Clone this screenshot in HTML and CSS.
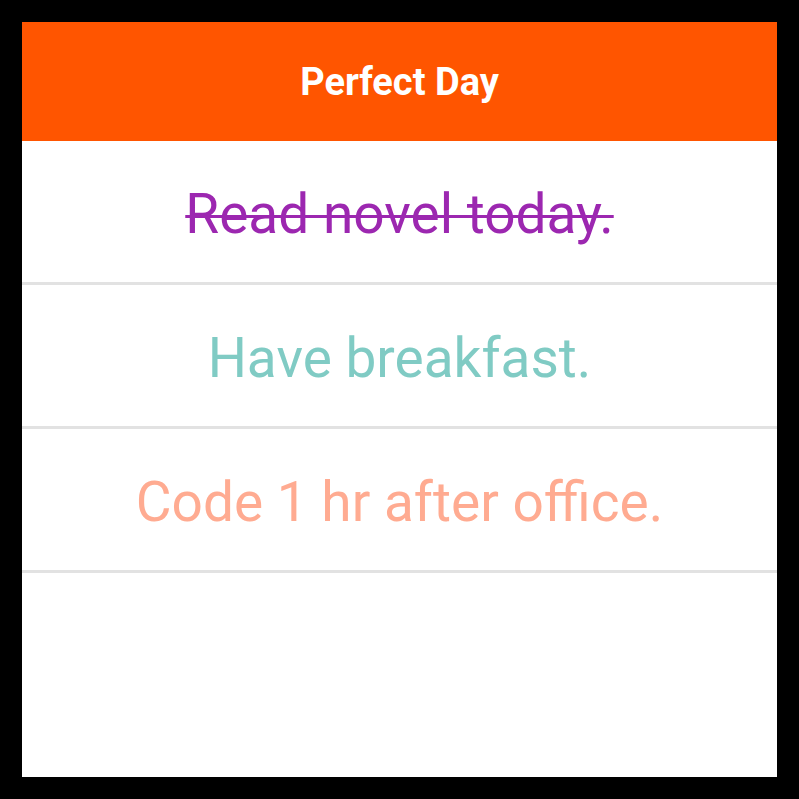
FILE: index.html
```html
<!DOCTYPE html>
<html>
<head>
<meta charset="utf-8">
<link rel="stylesheet" href="styles.css">
</head>
<body>
<div class="screen">
  <header class="appbar">Perfect Day</header>
  <ul class="list">
    <li class="item done">Read novel today.</li>
    <li class="item teal">Have breakfast.</li>
    <li class="item salmon">Code 1 hr after office.</li>
  </ul>
</div>
</body>
</html>
```
FILE: styles.css
```css
html, body {
  margin: 0;
  padding: 0;
  background: #000;
}
body {
  padding: 22px;
  width: 755px;
  height: 755px;
}
.screen {
  width: 755px;
  height: 755px;
  background: #fff;
  display: flex;
  flex-direction: column;
  font-family: Roboto, "Noto Sans", sans-serif;
}
.appbar {
  height: 119px;
  flex: none;
  background: #ff5500;
  color: #fff;
  font-weight: 700;
  font-size: 38px;
  display: flex;
  align-items: center;
  justify-content: center;
}
.list {
  list-style: none;
  margin: 0;
  padding: 0;
}
.item {
  box-sizing: border-box;
  height: 144px;
  border-bottom: 3px solid #e2e2e2;
  display: flex;
  align-items: center;
  justify-content: center;
  font-size: 55px;
  padding-top: 4px;
}
.done {
  color: #9c27b0;
  text-decoration: line-through;
  text-decoration-thickness: 3px;
}
.teal {
  color: #80cbc4;
}
.salmon {
  color: #ffab91;
}
```
